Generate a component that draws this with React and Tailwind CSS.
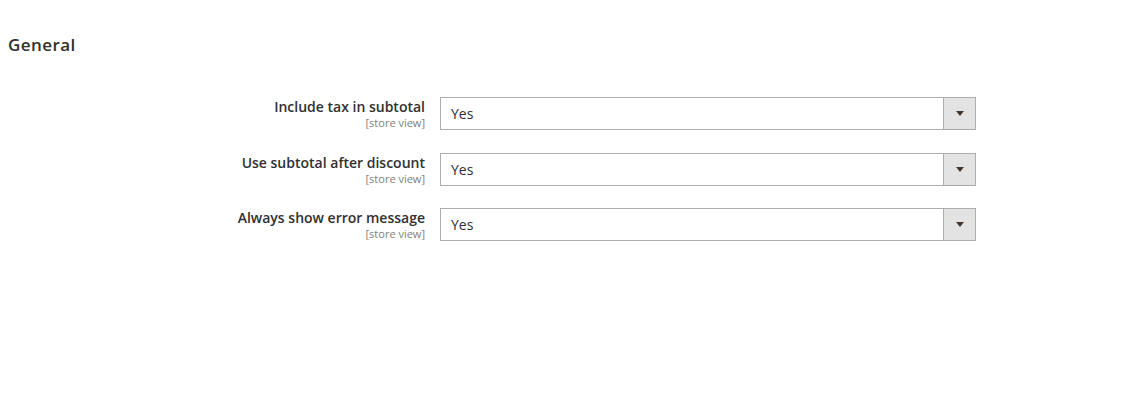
import React from 'react';

const rows = [
  'Include tax in subtotal',
  'Use subtotal after discount',
  'Always show error message',
];

function SelectBox({ value }) {
  return (
    <div className="flex h-[33px] w-[536px] border border-[#adadad] bg-white">
      <div className="flex-1 flex items-center pl-[10px] text-[14px] text-[#303030]">
        {value}
      </div>
      <div className="w-[32px] flex items-center justify-center bg-[#e3e3e3] border-l border-[#adadad]">
        <span className="block w-0 h-0 border-l-[4px] border-r-[4px] border-t-[5px] border-l-transparent border-r-transparent border-t-[#41362f]" />
      </div>
    </div>
  );
}

export default function App() {
  return (
    <div
      className="w-[1125px] h-[416px] bg-white text-[#303030]"
      style={{ fontFamily: "'Open Sans', 'Noto Sans', sans-serif" }}
    >
      <div className="pl-[8px] pt-[34px]">
        <h2 className="text-[17px] font-semibold leading-[22px] text-[#303030] tracking-[0.025em]">
          General
        </h2>
      </div>
      <div className="mt-[41px] flex flex-col gap-[22.5px]">
        {rows.map((label) => (
          <div key={label} className="flex">
            <div className="w-[425px] flex flex-col items-end pt-[1px]">
              <span className="text-[14px] font-semibold leading-[18px] text-[#303030]">
                {label}
              </span>
              <span className="text-[11px] leading-[14px] text-[#808080]">
                [store view]
              </span>
            </div>
            <div className="ml-[15px]">
              <SelectBox value="Yes" />
            </div>
          </div>
        ))}
      </div>
    </div>
  );
}
